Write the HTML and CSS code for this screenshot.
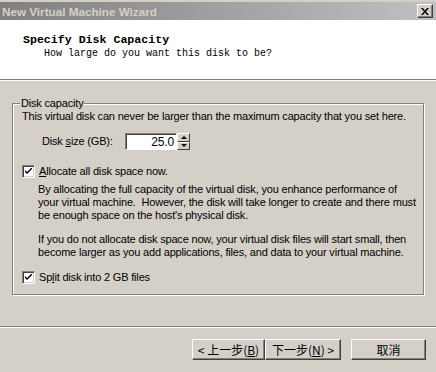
FILE: index.html
```html
<!DOCTYPE html>
<html lang="en">
<head>
    <meta charset="UTF-8">
    <title>New Virtual Machine Wizard</title>
    <link rel="stylesheet" href="styles.css">
</head>
<body>
    <div class="window">
        <!-- title bar -->
        <div class="titlebar">
            <span class="title">New Virtual Machine Wizard</span>
            <span class="close">
                <svg width="8" height="7" viewBox="0 0 8 7">
                    <path d="M0 0h2l2 2.5 2-2.5h2l-3 3.5 3 3.5h-2l-2-2.5-2 2.5h-2l3-3.5z" fill="#000"/>
                </svg>
            </span>
        </div>

        <!-- header -->
        <div class="header">
            <h2>Specify Disk Capacity</h2>
            <p>How large do you want this disk to be?</p>
        </div>

        <!-- body -->
        <div class="content">
            <div class="group">
                <span class="group-label">Disk capacity</span>
                <p class="line">This virtual disk can never be larger than the maximum capacity that you set here.</p>

                <div class="size-row">
                    <label>Disk <u>s</u>ize (GB):</label>
                    <div class="spin">
                        <span class="spin-value">25.0</span>
                        <span class="spin-btns">
                            <span class="spin-btn"><i class="arrow-up"></i></span>
                            <span class="spin-btn"><i class="arrow-down"></i></span>
                        </span>
                    </div>
                </div>

                <div class="check-row first">
                    <span class="checkbox">
                        <svg width="7" height="7" viewBox="0 0 7 7"><path d="M0 2l2 2 5-5v2l-5 5-2-2z" fill="#000"/></svg>
                    </span>
                    <span><u>A</u>llocate all disk space now.</span>
                </div>

                <p class="para one">By allocating the full capacity of the virtual disk, you enhance performance of<br>your virtual machine.&nbsp; However, the disk will take longer to create and there must<br>be enough space on the host's physical disk.</p>
                <p class="para two">If you do not allocate disk space now, your virtual disk files will start small, then<br>become larger as you add applications, files, and data to your virtual machine.</p>

                <div class="check-row last">
                    <span class="checkbox">
                        <svg width="7" height="7" viewBox="0 0 7 7"><path d="M0 2l2 2 5-5v2l-5 5-2-2z" fill="#000"/></svg>
                    </span>
                    <span>Sp<u>l</u>it disk into 2 GB files</span>
                </div>
            </div>
        </div>

        <!-- buttons -->
        <div class="footer">
            <div class="btn back">&lt; 上一步(<u>B</u>)</div>
            <div class="btn next">下一步(<u>N</u>) &gt;</div>
            <div class="btn cancel">取消</div>
        </div>
    </div>
</body>
</html>
```

FILE: styles.css
```css
body {
    margin: 0;
    background-color: #d4d0c8;
    font-family: "Liberation Sans", Arial, sans-serif;
    font-size: 11px;
    letter-spacing: -0.18px;
    color: #000;
}

.window {
    width: 436px;
    height: 372px;
    overflow: hidden;
    padding-top: 2px;
    box-sizing: border-box;
}

.titlebar {
    height: 18px;
    display: flex;
    align-items: center;
    justify-content: space-between;
    padding: 0 3px 0 2px;
    background: linear-gradient(to right, #808080, #c0c0c0);
}

.title {
    color: #d4d0c8;
    font-weight: bold;
    font-size: 11.7px;
    letter-spacing: 0;
}

.close {
    width: 16px;
    height: 14px;
    box-sizing: border-box;
    display: flex;
    align-items: center;
    justify-content: center;
    background-color: #d4d0c8;
    border: 1px solid;
    border-color: #fff #404040 #404040 #fff;
    box-shadow: inset -1px -1px 0 #808080;
}

.header {
    height: 60px;
    background-color: #fff;
    border-bottom: 1px solid #808080;
    box-shadow: 0 1px 0 #fff;
    padding: 12px 0 0 23px;
    box-sizing: border-box;
    font-family: "Liberation Mono", monospace;
    letter-spacing: 0;
}

.header h2 {
    margin: 0;
    font-size: 11.6px;
    line-height: 15px;
}

.header p {
    margin: 0 0 0 21px;
    font-size: 10px;
    line-height: 13px;
}

.content {
    padding: 23px 12px 0 12px;
}

.group {
    position: relative;
    height: 192px;
    box-sizing: border-box;
    border: 1px solid #808080;
    box-shadow: 1px 1px 0 #fff, inset 1px 1px 0 #fff;
    padding: 6px 0 0 9px;
    line-height: 13px;
}

.group-label {
    position: absolute;
    top: -7px;
    left: 7px;
    padding: 0 1px;
    background-color: #d4d0c8;
}

p {
    margin: 0;
}

.line {
    white-space: nowrap;
}

.size-row {
    display: flex;
    align-items: center;
    margin-top: 10px;
    padding-left: 20px;
}

.size-row label {
    width: 83px;
}

.spin {
    display: flex;
    height: 17px;
}

.spin-value {
    width: 52px;
    box-sizing: border-box;
    background-color: #fff;
    border: 1px solid;
    border-color: #808080 #fff #fff #808080;
    box-shadow: inset 1px 1px 0 #404040;
    text-align: right;
    padding-right: 2px;
    font-size: 12px;
    line-height: 16px;
}

.spin-btns {
    display: flex;
    flex-direction: column;
    width: 13px;
}

.spin-btn {
    flex: 1;
    display: flex;
    align-items: center;
    justify-content: center;
    box-sizing: border-box;
    border: 1px solid;
    border-color: #fff #404040 #404040 #fff;
    background-color: #d4d0c8;
}

.arrow-up,
.arrow-down {
    width: 0;
    height: 0;
    border-left: 3px solid transparent;
    border-right: 3px solid transparent;
}

.arrow-up {
    border-bottom: 3px solid #000;
}

.arrow-down {
    border-top: 3px solid #000;
}

.check-row {
    display: flex;
    align-items: center;
    gap: 4px;
}

.check-row.first {
    margin-top: 15px;
}

.check-row.last {
    margin-top: 12px;
}

.checkbox {
    width: 13px;
    height: 13px;
    box-sizing: border-box;
    display: flex;
    align-items: center;
    justify-content: center;
    background-color: #fff;
    border: 1px solid;
    border-color: #808080 #fff #fff #808080;
    box-shadow: inset 1px 1px 0 #404040, inset -1px -1px 0 #d4d0c8;
}

.para {
    white-space: nowrap;
    padding-left: 16px;
}

.para.one {
    margin-top: 5px;
}

.para.two {
    margin-top: 11px;
}

.footer {
    margin-top: 31px;
    border-top: 1px solid #808080;
    box-shadow: inset 0 1px 0 #fff;
    display: flex;
    padding: 12px 0 0 192px;
    font-family: "Noto Sans CJK SC", sans-serif;
    font-size: 12px;
    letter-spacing: 0;
}

.btn {
    height: 21px;
    box-sizing: border-box;
    display: flex;
    align-items: center;
    justify-content: center;
    border: 1px solid;
    border-color: #fff #404040 #404040 #fff;
    box-shadow: inset -1px -1px 0 #808080;
    background-color: #d4d0c8;
}

.back {
    width: 73px;
}

.next {
    width: 76px;
}

.cancel {
    width: 75px;
    margin-left: 10px;
}
```
